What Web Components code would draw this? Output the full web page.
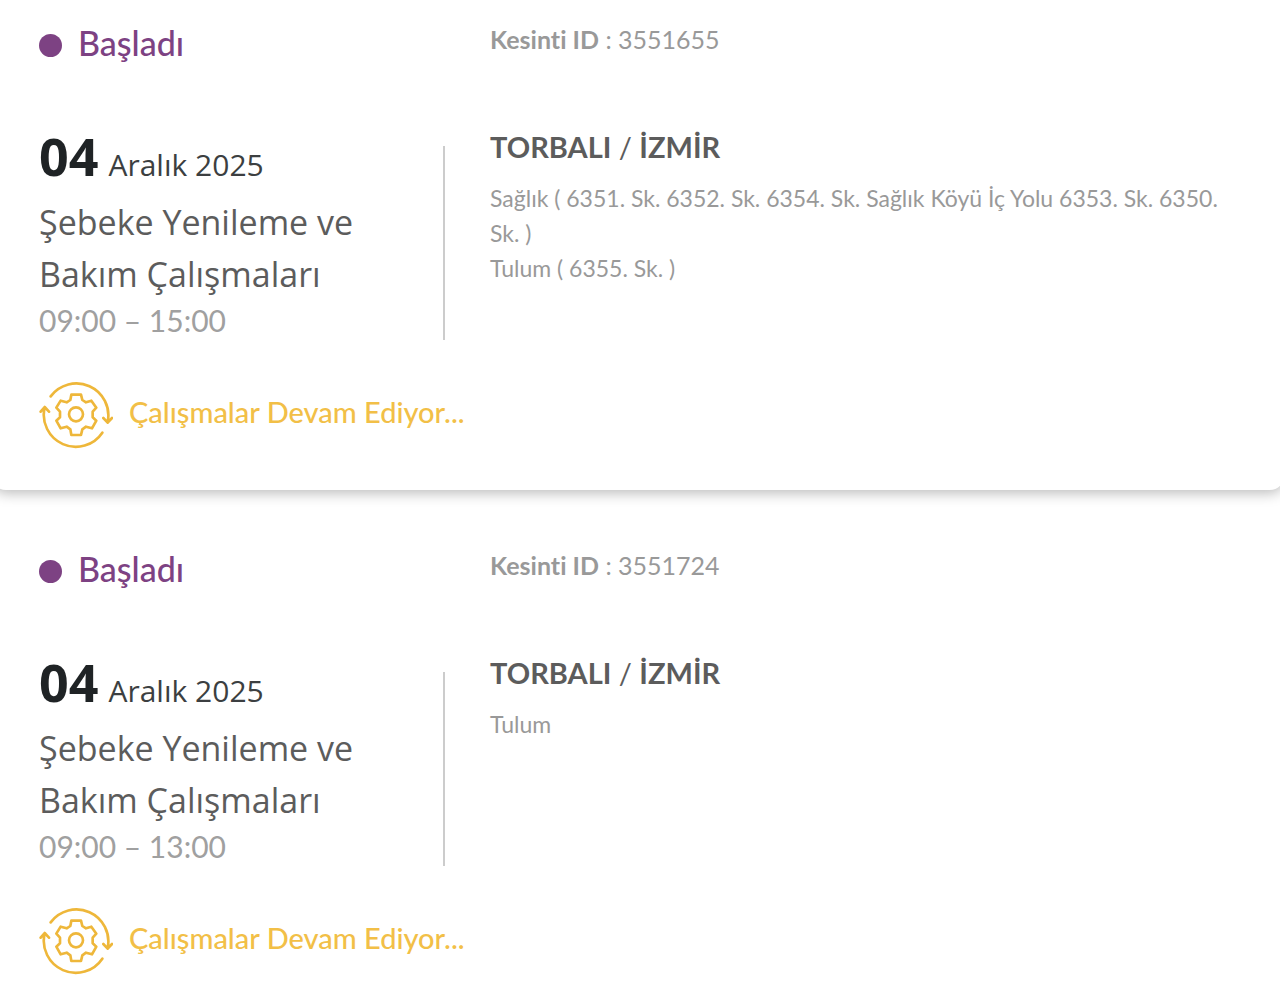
<!DOCTYPE html>
<html lang="tr">
<head>
<meta charset="utf-8">
<meta name="viewport" content="width=device-width, initial-scale=1">
<title>Planlı Kesintiler</title>
<style>
    body {
        margin: 0;
        background: #fff;
        font-family: Lato, "Open Sans", sans-serif;
        font-variant-ligatures: none;
    }
</style>
</head>
<body>

<outage-list>
    <outage-card outage-id="3551655" day="04" month="Aralık 2025" hours="09:00 – 15:00" district="TORBALI" city="İZMİR">
        <status-badge slot="status">Başladı</status-badge>
        <span slot="title">Şebeke Yenileme ve Bakım Çalışmaları</span>
        <div slot="area">Sağlık ( 6351. Sk. 6352. Sk. 6354. Sk. Sağlık Köyü İç Yolu 6353. Sk. 6350. Sk. )</div>
        <div slot="area">Tulum ( 6355. Sk. )</div>
        <work-progress slot="progress">Çalışmalar Devam Ediyor...</work-progress>
    </outage-card>
    <outage-card outage-id="3551724" day="04" month="Aralık 2025" hours="09:00 – 13:00" district="TORBALI" city="İZMİR">
        <status-badge slot="status">Başladı</status-badge>
        <span slot="title">Şebeke Yenileme ve Bakım Çalışmaları</span>
        <div slot="area">Tulum</div>
        <work-progress slot="progress">Çalışmalar Devam Ediyor...</work-progress>
    </outage-card>
</outage-list>

<script>
class OutageList extends HTMLElement {
    constructor() {
        super();
        this.attachShadow({ mode: 'open' }).innerHTML = `
        <style>
            :host {
                display: block;
                height: 100vh;
                overflow: hidden;
            }
            .list {
                display: flex;
                flex-direction: column;
                gap: 20px;
                margin: -16px -4px 0 -8px;
            }
        </style>
        <div class="list"><slot></slot></div>
        `;
    }
}

/**
 * Coloured dot with the state of the outage
 */
class StatusBadge extends HTMLElement {
    constructor() {
        super();
        this.attachShadow({ mode: 'open' }).innerHTML = `
        <style>
            :host {
                display: flex;
                align-items: center;
                gap: 16px;
                color: #7d4283;
                font-size: 34px;
                font-weight: 500;
                line-height: 38px;
            }
            .dot {
                width: 23px;
                height: 23px;
                margin-top: 4px;
                border-radius: 50%;
                background: currentColor;
            }
        </style>
        <span class="dot"></span>
        <span><slot></slot></span>
        `;
    }
}

/**
 * Gear with turning arrows and a message
 */
class WorkProgress extends HTMLElement {
    constructor() {
        super();
        this.attachShadow({ mode: 'open' }).innerHTML = `
        <style>
            :host {
                display: flex;
                align-items: center;
                gap: 16px;
                color: #f2bf47;
                font-size: 29px;
                font-weight: 500;
                line-height: 62px;
            }
            svg {
                flex: none;
                width: 74px;
                height: 68px;
                fill: none;
                stroke: #eeb73a;
                stroke-width: 8;
                stroke-linecap: round;
                stroke-linejoin: round;
            }
            span {
                padding-bottom: 6px;
            }
        </style>
        <svg viewBox="57 33 222 204" aria-hidden="true">
            <path d="M92 79A96 96 0 0 1 263 156M250 144L263 158L276 144"/>
            <path d="M247 188A96 96 0 0 1 74 112M62 125L74 111L87 125"/>
            <path d="M154 74H183L187 90L198 97L214 92L229 113L218 125V142L229 152L216 175L198 170L187 178L183 195H154L151 178L140 170L122 175L109 152L120 142V125L109 113L122 92L140 97L151 90Z"/>
            <circle cx="168" cy="133" r="21"/>
        </svg>
        <span><slot></slot></span>
        `;
    }
}

/**
 * One planned outage: date and work on the left, affected area on the right
 */
class OutageCard extends HTMLElement {
    constructor() {
        super();
        this.attachShadow({ mode: 'open' }).innerHTML = `
        <style>
            :host {
                display: block;
                padding: 40px 44px 41px 47px;
                border-radius: 0 0 14px 14px;
                background: #fff;
                box-shadow: 0 3px 14px rgba(0, 0, 0, .28);
                /* shadow falls below the card only */
                clip-path: inset(0 0 -20px);
            }
            .head, .body {
                display: grid;
                grid-template-columns: 406px 1fr;
                column-gap: 45px;
            }
            .head {
                margin-bottom: 70px;
            }
            .body {
                margin-bottom: 41px;
            }
            .id {
                color: #999;
                font-size: 25px;
                line-height: 30px;
            }
            .when {
                display: flex;
                justify-content: space-between;
            }
            .when::after {
                content: "";
                width: 2px;
                margin-top: 14px;
                background: #ccc;
            }
            .work {
                width: 340px;
            }
            .date {
                display: flex;
                align-items: baseline;
                gap: 10px;
                margin-bottom: 15px;
                color: #3c3f41;
                font: 30px/32px "Open Sans", sans-serif;
            }
            .date b {
                color: #1f2325;
                font-size: 52px;
                line-height: 48px;
            }
            h2 {
                margin: 0;
                color: #5c5c5c;
                font: 500 34px/52px "Open Sans", sans-serif;
            }
            .hours {
                color: #a0a0a0;
                font-size: 30px;
                line-height: 40px;
            }
            h3 {
                margin: 0 0 19px;
                color: #5c5c5c;
                font-size: 29px;
                font-weight: 400;
                line-height: 30px;
            }
            .area {
                color: #999;
                font-size: 23px;
                line-height: 35px;
            }
        </style>
        <div class="head">
            <slot name="status"></slot>
            <div class="id"><b>Kesinti ID</b> : <span class="number"></span></div>
        </div>
        <div class="body">
            <div class="when">
                <div class="work">
                    <div class="date"><b class="day"></b><span class="month"></span></div>
                    <h2><slot name="title"></slot></h2>
                    <div class="hours"></div>
                </div>
            </div>
            <div>
                <h3><b class="district"></b> / <b class="city"></b></h3>
                <div class="area"><slot name="area"></slot></div>
            </div>
        </div>
        <slot name="progress"></slot>
        `;
    }

    connectedCallback() {
        const fill = (selector, attribute) => {
            this.shadowRoot.querySelector(selector).textContent = this.getAttribute(attribute);
        };
        fill('.number', 'outage-id');
        fill('.day', 'day');
        fill('.month', 'month');
        fill('.hours', 'hours');
        fill('.district', 'district');
        fill('.city', 'city');
    }
}

customElements.define('outage-list', OutageList);
customElements.define('status-badge', StatusBadge);
customElements.define('work-progress', WorkProgress);
customElements.define('outage-card', OutageCard);
</script>
</body>
</html>
